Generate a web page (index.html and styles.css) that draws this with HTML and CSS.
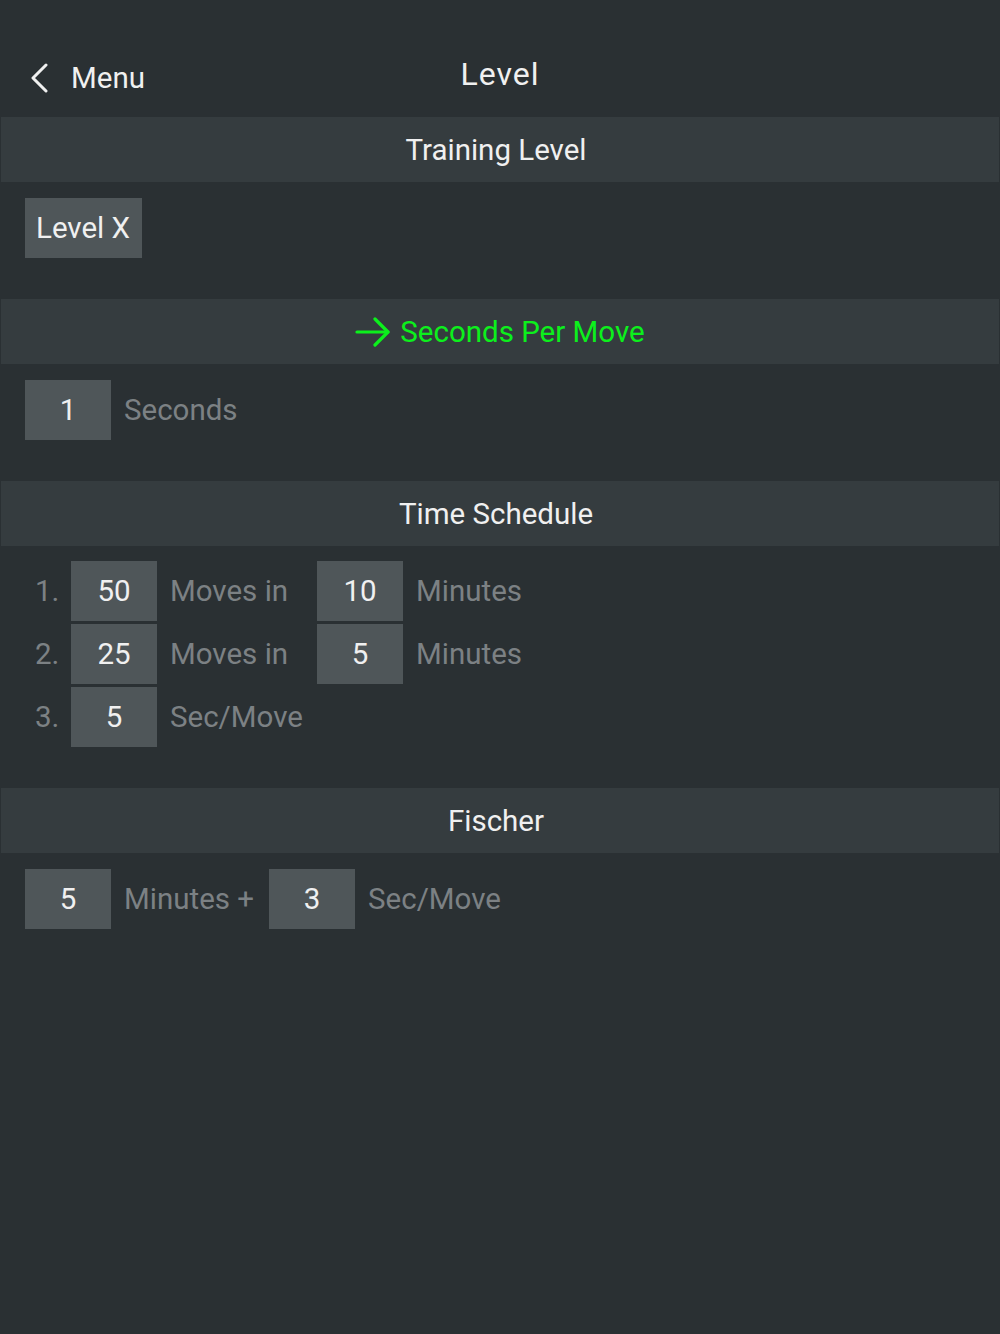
FILE: index.html
```html
<!DOCTYPE html>
<html>
<head>
<meta charset="utf-8">
<link rel="stylesheet" href="styles.css">
</head>
<body>
<div class="app">
  <header class="topbar">
    <div class="back">
      <svg class="chev" width="20" height="30" viewBox="0 0 20 30"><polyline points="16,2 3,15 16,28" fill="none" stroke="#f0f0f0" stroke-width="3" stroke-linecap="round" stroke-linejoin="round"/></svg>
      <span class="back-label">Menu</span>
    </div>
    <h1 class="title">Level</h1>
  </header>

  <section class="section">
    <div class="sec-head">Training Level</div>
    <div class="sec-body">
      <div class="row">
        <div class="box box-wide">Level X</div>
      </div>
    </div>
  </section>

  <section class="section">
    <div class="sec-head active">
      <svg class="arrow" width="36" height="30" viewBox="0 0 36 30"><g fill="none" stroke="#0cf01c" stroke-width="3.2" stroke-linecap="round" stroke-linejoin="round"><line x1="2" y1="15" x2="33" y2="15"/><polyline points="20,2 33,15 20,28"/></g></svg>
      <span>Seconds Per Move</span>
    </div>
    <div class="sec-body">
      <div class="row">
        <div class="box">1</div>
        <span class="lbl">Seconds</span>
      </div>
    </div>
  </section>

  <section class="section">
    <div class="sec-head">Time Schedule</div>
    <div class="sec-body sched">
      <div class="row">
        <span class="num">1.</span>
        <div class="box">50</div>
        <span class="lbl lbl-fixed">Moves in</span>
        <div class="box">10</div>
        <span class="lbl">Minutes</span>
      </div>
      <div class="row">
        <span class="num">2.</span>
        <div class="box">25</div>
        <span class="lbl lbl-fixed">Moves in</span>
        <div class="box">5</div>
        <span class="lbl">Minutes</span>
      </div>
      <div class="row">
        <span class="num">3.</span>
        <div class="box">5</div>
        <span class="lbl">Sec/Move</span>
      </div>
    </div>
  </section>

  <section class="section">
    <div class="sec-head">Fischer</div>
    <div class="sec-body">
      <div class="row">
        <div class="box">5</div>
        <span class="lbl lbl-tight">Minutes +</span>
        <div class="box">3</div>
        <span class="lbl">Sec/Move</span>
      </div>
    </div>
  </section>
</div>
</body>
</html>
```

FILE: styles.css
```css
html, body {
  margin: 0;
  padding: 0;
  background: #2a3033;
}
body {
  font-family: Roboto, "Noto Sans", sans-serif;
  color: #f0f0f0;
  width: 1000px;
  min-height: 1334px;
}
.app {
  display: flex;
  flex-direction: column;
}
.topbar {
  position: relative;
  height: 117px;
  display: flex;
  align-items: center;
  justify-content: center;
}
.back {
  position: absolute;
  left: 30px;
  top: 63px;
  display: flex;
  align-items: center;
  gap: 21px;
}
.back-label {
  font-size: 29.5px;
  line-height: 30px;
  color: #f0f0f0;
}
.title {
  margin: 0;
  padding-top: 30px;
  font-size: 32px;
  letter-spacing: 1px;
  font-weight: 400;
  line-height: 32px;
  color: #f0f0f0;
}
.section {
  display: flex;
  flex-direction: column;
}
.sec-head {
  margin: 0 1px;
  height: 65px;
  padding-right: 8px;
  background: #353c3f;
  display: flex;
  align-items: center;
  justify-content: center;
  font-size: 29.5px;
  color: #f0f0f0;
  gap: 9px;
}
.sec-head.active {
  color: #0cf01c;
  padding-right: 0;
}
.arrow {
  display: block;
}
.sec-body {
  padding: 16px 25px 41px;
  display: flex;
  flex-direction: column;
  gap: 3px;
}
.sched {
  padding-top: 15px;
  padding-left: 35px;
}
.row {
  display: flex;
  align-items: center;
  height: 60px;
}
.box {
  width: 86px;
  height: 60px;
  background: #4f5659;
  display: flex;
  align-items: center;
  justify-content: center;
  font-size: 29.5px;
  color: #f0f0f0;
}
.box-wide {
  width: auto;
  padding: 0 12px 0 11px;
  justify-content: flex-start;
}
.lbl {
  margin-left: 13px;
  font-size: 29.5px;
  color: #7c8184;
}
.lbl-fixed {
  width: 147px;
  flex: none;
}
.lbl-tight {
  margin-right: 15px;
}
.num {
  width: 36px;
  font-size: 29.5px;
  color: #7c8184;
}
```
